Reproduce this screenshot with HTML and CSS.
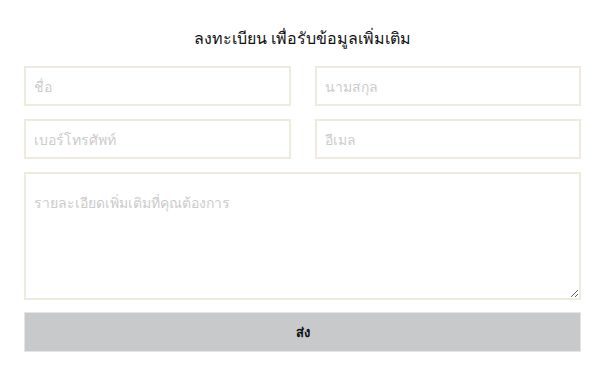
FILE: index.html
```html
<!DOCTYPE html>
<html>
<head>
	<title>ลงทะเบียน</title>
	<link rel="stylesheet" href="styles.css">
</head>
<body>
	<form class="contact_form">
		<h2 class="form_title">ลงทะเบียน เพื่อรับข้อมูลเพิ่มเติม</h2>
		<div class="form_grid">
			<input type="text" class="form_field" placeholder="ชื่อ">
			<input type="text" class="form_field" placeholder="นามสกุล">
			<input type="text" class="form_field" placeholder="เบอร์โทรศัพท์">
			<input type="text" class="form_field" placeholder="อีเมล">
			<textarea class="form_field form_area" placeholder="รายละเอียดเพิ่มเติมที่คุณต้องการ"></textarea>
			<button type="button" class="form_submit">ส่ง</button>
		</div>
	</form>
</body>
</html>
```
FILE: styles.css
```css
*{
	margin: 0px;
	padding: 0px;
	box-sizing: border-box;
}
body
{
	background-color: #fff;
	font-family: "Noto Sans", "Liberation Sans", sans-serif;
}
.contact_form
{
	padding: 25px 19px 0px 24px;
}
.form_title
{
	font-size: 16px;
	font-weight: normal;
	color: #111;
	text-align: center;
	height: 26px;
	line-height: 26px;
	margin-bottom: 15px;
}
.form_grid
{
	display: grid;
	grid-template-columns: 1fr 1fr;
	column-gap: 24px;
	row-gap: 13px;
}
.form_field
{
	height: 40px;
	border: 2px solid #eeeadc;
	outline: none;
	padding: 0px 8px;
	font-family: inherit;
	font-size: 14px;
	color: #333;
	background-color: #fff;
}
.form_field::placeholder
{
	color: #cbcbcb;
}
.form_area
{
	grid-column: span 2;
	height: 128px;
	padding: 18px 8px;
	resize: vertical;
}
.form_submit
{
	grid-column: span 2;
	height: 40px;
	border: 1px solid #e4e5e6;
	background-color: #c8c9cb;
	font-family: inherit;
	font-size: 13px;
	font-weight: bold;
	color: #111;
	margin-top: -1px;
}
```
